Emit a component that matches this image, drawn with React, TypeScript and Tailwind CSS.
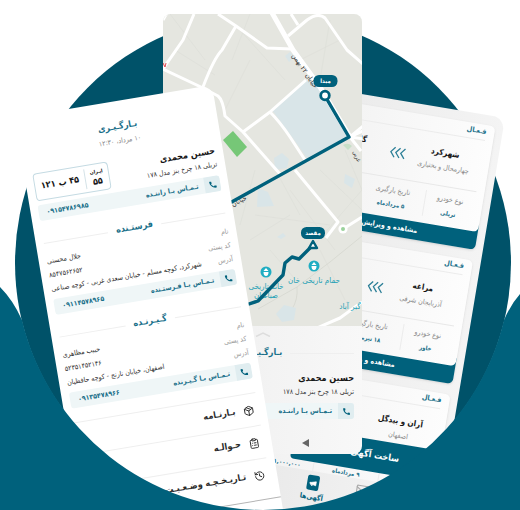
import type { ReactNode } from "react";
import { MdCall } from "react-icons/md";
import { LuPackage, LuClipboardList, LuHistory, LuChevronLeft, LuMegaphone, LuMail } from "react-icons/lu";

type Party = {
  title: string;
  name: string;
  code: string;
  address: string;
  call: string;
  phone: string;
};

type Listing = {
  from: string;
  province: string;
  to: string;
  vehicle: string;
  date: string;
};

const parties: Party[] = [
  {
    title: "فرستـنده",
    name: "جلال محسنی",
    code: "۸۵۴۷۵۶۲۶۵۲",
    address: "شهرکرد، کوچه مسلم - خیابان سعدی غربی - کوچه صناعی",
    call: "تـمـاس بـا فـرستـنده",
    phone: "۰۹۱۱۴۵۷۸۹۶۵",
  },
  {
    title: "گـیـرنـده",
    name: "حبیب مظاهری",
    code: "۵۲۳۵۱۴۵۲۱۴۶",
    address: "اصفهان، خیابان نارنج - کوچه حافظیان",
    call: "تـمـاس بـا گـیـرنده",
    phone: "۰۹۱۳۵۴۷۸۹۶۶",
  },
];

const listings: Listing[] = [
  { from: "شهرکرد", province: "چهارمحال و بختیاری", to: "گلپایگان", vehicle: "تریلی", date: "۵ مردادماه" },
  { from: "مراغه", province: "آذربایجان شرقی", to: "تبریز", vehicle: "خاور", date: "۱۸ تیرماه" },
  { from: "آران و بیدگل", province: "اصفهان", to: "قم", vehicle: "تریلی", date: "۹ مردادماه" },
];

const menu = [
  { label: "بـارنـامه", Icon: LuPackage },
  { label: "حـوالـه", Icon: LuClipboardList },
  { label: "تـاریـخـچـه وضـعـیـت‌هـا", Icon: LuHistory },
];

function CallBar({ label, phone }: { label: string; phone?: string }) {
  return (
    <a
      href={phone ? `tel:${phone}` : "#call"}
      className="flex h-4 items-center gap-1.5 overflow-hidden rounded-[3px] bg-[#eff6f7] text-[7px] font-bold text-[#1a708a]"
    >
      <span className="flex h-4 w-4 items-center justify-center bg-[#e0edf0] text-[#00617c]">
        <MdCall size={9} />
      </span>
      <span className="whitespace-nowrap">{label}</span>
      {phone && <span className="mr-auto pl-2">{phone}</span>}
    </a>
  );
}

function SectionTitle({ children }: { children: ReactNode }) {
  return (
    <h2 className="flex h-4 items-center gap-2 text-[9px] font-bold text-[#1a708a]">
      <span className="h-px flex-1 bg-[#efefef]" />
      {children}
      <span className="h-px flex-1 bg-[#efefef]" />
    </h2>
  );
}

function Driver() {
  return (
    <div className="whitespace-nowrap">
      <p className="text-[9px] leading-[14px] font-bold text-[#161616]">حسین محمدی</p>
      <p className="text-[7px] leading-[14px] text-[#333]">تریلی ۱۸ چرخ بنز مدل ۱۷۸</p>
    </div>
  );
}

function LoadingPhone() {
  return (
    <article className="absolute top-[85px] left-[12px] h-[440px] w-[200px] origin-top-right -rotate-[9.5deg] overflow-hidden rounded-xl bg-white px-2 pt-[18px]">
      <h1 className="text-center text-[9px] leading-[14px] font-bold text-[#1a708a]">بـارگـیـری</h1>
      <p className="mt-0.5 text-center text-[7px] leading-3 text-[#888]">۱۰ مرداد، ۱۲:۳۰</p>
      <div className="mt-3 flex items-start justify-between">
        <Driver />
        <div className="flex h-7 w-[76px] items-center rounded-sm border border-[#c5dbe3] font-bold text-[#161616]">
          <div className="flex w-6 flex-col items-center border-l border-[#d5e3e8]">
            <span className="text-[5px] leading-2">ایـران</span>
            <span className="text-[9px] leading-3">۵۵</span>
          </div>
          <span className="flex-1 text-center text-[9px] whitespace-nowrap">۴۵ ب ۱۲۱</span>
        </div>
      </div>
      <div className="mt-1">
        <CallBar label="تـمـاس بـا راننـده" phone="۰۹۱۵۴۷۸۶۹۸۵" />
      </div>
      {parties.map((p) => (
        <section key={p.title} className="mt-[14px]">
          <SectionTitle>{p.title}</SectionTitle>
          <dl className="mt-1 mb-[3px] text-[7px] leading-[14px] whitespace-nowrap text-[#333]">
            <div className="flex justify-between">
              <dt className="text-[#999]">نام</dt>
              <dd>{p.name}</dd>
            </div>
            <div className="flex justify-between">
              <dt className="text-[#999]">کد پستی</dt>
              <dd>{p.code}</dd>
            </div>
            <div className="flex justify-between">
              <dt className="text-[#999]">آدرس</dt>
              <dd>{p.address}</dd>
            </div>
          </dl>
          <CallBar label={p.call} phone={p.phone} />
        </section>
      ))}
      <nav className="mt-[14px]">
        {menu.map(({ label, Icon }) => (
          <button
            key={label}
            className="flex h-[33px] w-full items-center gap-2 border-t border-[#efefef] px-1 text-[9px] font-bold text-[#2b2b2b]"
          >
            <Icon size={11} />
            <span className="whitespace-nowrap">{label}</span>
            <LuChevronLeft size={8} className="mr-auto" />
          </button>
        ))}
      </nav>
      <div className="-mx-2 mt-2 border-t border-[#b5b5b5]" />
    </article>
  );
}

function RouteMap() {
  return (
    <svg viewBox="163 14 199 312" className="block w-full" role="img" aria-label="نقشه مسیر">
      <rect x="163" y="14" width="199" height="312" fill="#e5e6e0" />
      <g stroke="#dcded7" strokeWidth="0.6" fill="none">
        <path d="M170 14L205 60M240 30L285 80M175 50L215 75M250 14L232 60M300 60L340 40M330 20L320 80M250 60L225 110M255 170L240 225M270 160L300 215M290 190L335 250M250 240L290 215M255 215L330 225M310 250L362 190M320 170L362 210M320 250L345 300M270 250L300 285M345 150L362 190" />
        <path d="M362 236L330 262L297 287L258 309M297 287Q298 300 292 309" stroke="#d0d2ca" />
      </g>
      <g fill="#d9e5e8">
        <path d="M272 110L306 80L320 87L348 136L307 158L292 137Z" />
        <path d="M285 56l5-4 5 5-6 5zM274 158l8-5 7 6-2 9-12 2zM258 188l10 4 6 14-17 1zM345 174l10 5-3 9-8-5zM276 314l8-9 12 3-2 12-12 2zM277 237l6-4 3 3-5 3z" />
      </g>
      <g fill="none" stroke="#fff" strokeLinejoin="round" strokeWidth="3">
        <path d="M194 14L183 40L163 69L203 88L218 96Q223 100 225 116L243 132L280 174" />
        <path d="M218 14L236 26L267 48L292 49M236 26L222 50Q214 58 203 87" />
        <path d="M291 14L298 25M288 36L307 20Q318 12 325 18L347 50L363 64" />
        <path d="M243 132L270 112L306 80M270 112Q280 122 290 137L305 160M295 170L338 222L326 238M343 229L362 217" />
        <path d="M317 328L340 318L362 302M163 20l4-7M350 137l13-11M350 137l13-6M350 137l13 2M350 137l11 14" />
        <path d="M271 11L293 50L320 87L350 137" strokeWidth="5" />
      </g>
      <path d="M233 131L247 147L237 157L223 140Z" fill="#76c777" />
      <path d="M343 145q5-3 9 1l-4 4z" fill="#c8dfc8" />
      <circle cx="343" cy="229" r="4.6" fill="#fff" />
      <circle cx="343" cy="229" r="2" fill="#9bd29c" />
      <path d="M163 63l2 4 1-4" fill="none" stroke="#e0454f" />
      <g fill="#333" fontSize="7" textAnchor="middle">
        <text transform="translate(303 72) rotate(56)">خیابان ۲۲ بهمن</text>
        <text transform="translate(240 203) rotate(-27)">خیابان</text>
        <text transform="translate(355 157) rotate(65)" fontSize="6">غربی</text>
      </g>
      <g fill="#229fb5" fontSize="8" textAnchor="middle">
        <text x="314" y="283">حمام تاریخی خان</text>
        <text x="266" y="289">خانه تاریخی</text>
        <text x="266" y="298">صباغیان</text>
        <text x="350" y="309">گبر آباد</text>
      </g>
      <g fill="none" stroke="#00617c" strokeWidth="3.4" strokeLinejoin="round">
        <path d="M325 96L349 137L228 204" />
        <path d="M246 305L258 301L283 275L285 263L292 257L299 259L313 245" />
        <circle cx="325" cy="95.5" r="4.3" fill="#fff" strokeWidth="2.8" />
        <path d="M313 241L317 248H309Z" fill="#fff" strokeWidth="2.4" />
      </g>
      <g fill="#20adc2">
        <circle cx="266" cy="272" r="5.5" />
        <circle cx="314" cy="266" r="5.5" />
      </g>
      <g fill="#fff">
        <path d="M266 268l2.500 3h-5zM263.500 272h5q0 4-2.500 4t-2.500-4zM314 262l2.500 3h-5zM311.500 266h5q0 4-2.500 4t-2.500-4z" />
      </g>
      <rect x="313.5" y="75" width="24" height="12" rx="5.5" fill="#00617c" />
      <rect x="301" y="227" width="24" height="12" rx="5.5" fill="#00617c" />
      <g fill="#fff" fontSize="6" fontWeight="700" textAnchor="middle">
        <text x="325.5" y="83">مبدا</text>
        <text x="313" y="235">مقصد</text>
      </g>
    </svg>
  );
}

function MapPhone() {
  return (
    <article className="absolute top-[14px] left-[163px] h-[440px] w-[199px] overflow-hidden rounded-lg bg-linear-to-r from-[#ededed] to-[#f8f8f8]">
      <RouteMap />
      <div className="px-2 pt-1.5">
        <svg viewBox="0 0 16 5" className="mx-auto h-[5px] w-4" fill="none" stroke="#ddd" strokeWidth="1.5">
          <path d="M1 4.500L8 1L15 4.500" />
        </svg>
        <div className="mt-2">
          <SectionTitle>بـارگـیـری</SectionTitle>
        </div>
        <div className="mt-2.5 mb-1">
          <Driver />
        </div>
        <CallBar label="تـمـاس بـا راننـده" />
        <svg viewBox="0 0 8 8" className="mt-5 mr-11 h-2 w-2" fill="#666">
          <path d="M7 0V8L0 4Z" />
        </svg>
      </div>
    </article>
  );
}

function ListingCard({ item }: { item: Listing }) {
  return (
    <section className="h-[125px] rounded-[5px] shadow-sm">
      <div className="relative z-10 h-[107px] rounded-[5px] bg-linear-to-r from-[#f1f1f1] to-[#fdfdfd] px-2">
        <p className="h-4 border-b border-[#ececec] text-[7px] leading-[14px] font-bold text-[#1a708a]">فـعـال</p>
        <div className="flex h-[51px] justify-between px-1 pt-3">
          <div className="w-[66px] text-center whitespace-nowrap">
            <p className="text-[8px] leading-[14px] font-bold text-[#161616]">{item.from}</p>
            <p className="text-[7px] leading-[14px] text-[#888]">{item.province}</p>
          </div>
          <svg viewBox="0 0 16 12" className="mt-2 h-3 w-4" fill="none" stroke="#2c7f97" strokeWidth="1.3">
            <path d="M5 1L1 6L5 11M10 1L6 6L10 11M15 1L11 6L15 11" />
          </svg>
          <div className="w-[66px] text-center whitespace-nowrap">
            <p className="text-[8px] leading-[14px] font-bold text-[#161616]">{item.to}</p>
            <p className="text-[7px] leading-[14px] text-[#888]">اصفهان</p>
          </div>
        </div>
        <div className="flex border-t border-[#e8e8e8] pt-1.5 text-center text-[7px] leading-[13px] whitespace-nowrap text-[#888]">
          <div className="w-[50px] border-l border-[#ececec]">
            <p>نوع خودرو</p>
            <p className="text-[6px] font-bold text-[#1a708a]">{item.vehicle}</p>
          </div>
          <div className="w-[66px] border-l border-[#ececec]">
            <p>تاریخ بارگیری</p>
            <p className="text-[6px] font-bold text-[#1a708a]">{item.date}</p>
          </div>
          <div className="flex-1">
            <p>قیمت</p>
            <p className="text-[6px] font-bold text-[#1a708a]">۱,۰۰۰,۰۰۰</p>
          </div>
        </div>
      </div>
      <button className="-mt-2 block h-[26px] w-full rounded-b-[5px] bg-[#00617c] pt-2 pr-[60px] text-right text-[7px] leading-4 font-bold text-white">
        مشاهده و ویرایش ✎
      </button>
    </section>
  );
}

function ListingsPhone() {
  return (
    <article className="absolute top-[118px] left-[305px] h-[440px] w-[200px] origin-top-right rotate-[9.5deg] overflow-hidden rounded-xl bg-linear-to-r from-[#e9e9e9] to-[#f4f4f4]">
      <div className="flex flex-col gap-[11px] px-2 pt-2.5">
        {listings.map((item) => (
          <ListingCard key={item.from} item={item} />
        ))}
      </div>
      <button className="absolute top-[339px] right-2 z-20 h-[32px] w-[148px] rounded-[4px] bg-[#00617c] pr-10 text-right text-[9px] font-bold text-white">
        ساخت آگهی +
      </button>
      <nav className="absolute top-[380px] z-20 flex h-[60px] w-full gap-[31px] bg-linear-to-r from-[#e8e8e8] to-[#f6f6f6] pt-1 pr-[72px] text-[7px] font-bold text-[#00617c]">
        <LuMail size={14} className="text-[#aaa]" />
        <a href="#ads" className="flex flex-col items-center leading-[14px]">
          <span className="flex h-[15px] w-3 items-center justify-center rounded-[2px] bg-[#00617c] text-white">
            <LuMegaphone size={8} fill="currentColor" />
          </span>
          آگهی‌ها
        </a>
      </nav>
    </article>
  );
}

export default function App() {
  return (
    <main
      dir="rtl"
      lang="fa"
      className="relative mx-auto h-[510px] w-full max-w-[520px] overflow-hidden bg-white font-['DejaVu_Sans_Condensed','DejaVu_Sans',sans-serif]"
    >
      <svg viewBox="0 0 520 510" className="absolute inset-0 h-full w-full" aria-hidden="true">
        <circle cx="263" cy="263" r="248" fill="#005269" />
      </svg>
      <ListingsPhone />
      <MapPhone />
      <LoadingPhone />
      <svg viewBox="0 0 520 510" className="pointer-events-none absolute inset-0 h-full w-full" aria-hidden="true">
        <path
          d="M0 287Q13 300 22 320A248 248 0 0 0 263 510A248 248 0 0 0 504 320Q511 304 520 294V510H0Z"
          fill="#00617c"
        />
      </svg>
    </main>
  );
}
